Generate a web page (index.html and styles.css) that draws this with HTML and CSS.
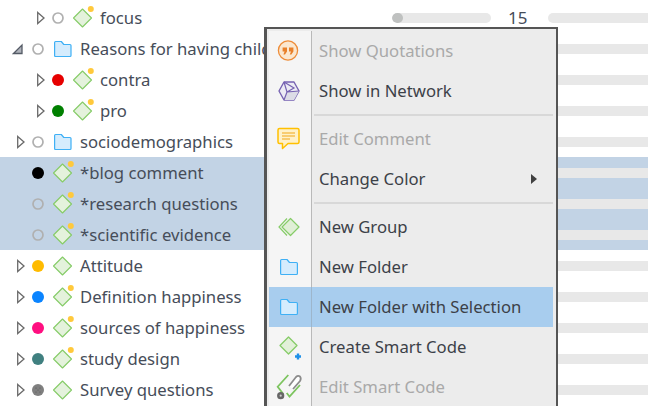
FILE: index.html
```html
<!DOCTYPE html>
<html lang="en">
<head>
<meta charset="utf-8">
<title>Code Manager</title>
<link rel="stylesheet" href="styles.css">
</head>
<body>
<svg class="defs" width="0" height="0" aria-hidden="true">
  <symbol id="closed" viewBox="0 0 19 14"><path d="M5.7 1.5 L12 7 L5.7 12.5 Z" fill="#fff" stroke="#6a6a6a" stroke-width="1.3"/></symbol>
  <symbol id="open" viewBox="0 0 19 14"><path d="M1.5 11.5 L10 3 V11.5 Z" fill="#aeb2ba" stroke="#555b66" stroke-width="1.3"/></symbol>
  <symbol id="ring" viewBox="0 0 14 14"><circle cx="7" cy="7" r="5" fill="none" stroke="#b0b0b0" stroke-width="1.7"/></symbol>
  <symbol id="disc" viewBox="0 0 14 14"><circle cx="7" cy="7" r="6" fill="currentColor"/></symbol>
  <symbol id="code" viewBox="0 0 22 24"><path d="M9.5 3 L18.5 12 L9.5 21 L0.5 12 Z" fill="#e4f2dc" stroke="#86cc68" stroke-width="1.1" stroke-linejoin="round"/></symbol>
  <symbol id="memo" viewBox="0 0 22 24"><path d="M9.5 3 L18.5 12 L9.5 21 L0.5 12 Z" fill="#e4f2dc" stroke="#86cc68" stroke-width="1.1" stroke-linejoin="round"/><circle cx="17.8" cy="3" r="3" fill="#ffc93c"/></symbol>
  <symbol id="folder" viewBox="0 0 22 24"><path d="M1.6 5.5 Q1.6 4.5 2.6 4.5 H8.3 L10.8 7.5 H17 Q18 7.5 18 8.5 V18.5 Q18 19.5 17 19.5 H2.6 Q1.6 19.5 1.6 18.5 Z" fill="#d5ecfd" stroke="#3fb0f5" stroke-width="1.2" stroke-linejoin="round"/></symbol>
</svg>

<main class="tree">
  <div class="row"><div class="cell l2"><svg class="twist"><use href="#closed"/></svg><svg class="bullet"><use href="#ring"/></svg><svg class="glyph"><use href="#memo"/></svg><span class="label">focus</span></div><div class="bar"><i class="fill"></i></div><div class="count">15</div><div class="bar wide"></div></div>
  <div class="row"><div class="cell l1"><svg class="twist"><use href="#open"/></svg><svg class="bullet"><use href="#ring"/></svg><svg class="glyph"><use href="#folder"/></svg><span class="label">Reasons for having children</span></div><div class="bar"></div><div class="count"></div><div class="bar wide"></div></div>
  <div class="row"><div class="cell l2"><svg class="twist"><use href="#closed"/></svg><svg class="bullet c-red"><use href="#disc"/></svg><svg class="glyph"><use href="#memo"/></svg><span class="label">contra</span></div><div class="bar"></div><div class="count"></div><div class="bar wide"></div></div>
  <div class="row"><div class="cell l2"><svg class="twist"><use href="#closed"/></svg><svg class="bullet c-green"><use href="#disc"/></svg><svg class="glyph"><use href="#memo"/></svg><span class="label">pro</span></div><div class="bar"></div><div class="count"></div><div class="bar wide"></div></div>
  <div class="row"><div class="cell l1"><svg class="twist"><use href="#closed"/></svg><svg class="bullet"><use href="#ring"/></svg><svg class="glyph"><use href="#folder"/></svg><span class="label">sociodemographics</span></div><div class="bar"></div><div class="count"></div><div class="bar wide"></div></div>
  <div class="row sel"><div class="cell l1"><span class="twist"></span><svg class="bullet c-black"><use href="#disc"/></svg><svg class="glyph"><use href="#memo"/></svg><span class="label">*blog comment</span></div><div class="bar"></div><div class="count"></div><div class="bar wide"></div></div>
  <div class="row sel"><div class="cell l1"><span class="twist"></span><svg class="bullet"><use href="#ring"/></svg><svg class="glyph"><use href="#memo"/></svg><span class="label">*research questions</span></div><div class="bar"></div><div class="count"></div><div class="bar wide"></div></div>
  <div class="row sel"><div class="cell l1"><span class="twist"></span><svg class="bullet"><use href="#ring"/></svg><svg class="glyph"><use href="#memo"/></svg><span class="label">*scientific evidence</span></div><div class="bar"></div><div class="count"></div><div class="bar wide"></div></div>
  <div class="row"><div class="cell l1"><svg class="twist"><use href="#closed"/></svg><svg class="bullet c-amber"><use href="#disc"/></svg><svg class="glyph"><use href="#code"/></svg><span class="label">Attitude</span></div><div class="bar"></div><div class="count"></div><div class="bar wide"></div></div>
  <div class="row"><div class="cell l1"><svg class="twist"><use href="#closed"/></svg><svg class="bullet c-blue"><use href="#disc"/></svg><svg class="glyph"><use href="#memo"/></svg><span class="label">Definition happiness</span></div><div class="bar"></div><div class="count"></div><div class="bar wide"></div></div>
  <div class="row"><div class="cell l1"><svg class="twist"><use href="#closed"/></svg><svg class="bullet c-pink"><use href="#disc"/></svg><svg class="glyph"><use href="#memo"/></svg><span class="label">sources of happiness</span></div><div class="bar"></div><div class="count"></div><div class="bar wide"></div></div>
  <div class="row"><div class="cell l1"><svg class="twist"><use href="#closed"/></svg><svg class="bullet c-teal"><use href="#disc"/></svg><svg class="glyph"><use href="#memo"/></svg><span class="label">study design</span></div><div class="bar"></div><div class="count"></div><div class="bar wide"></div></div>
  <div class="row"><div class="cell l1"><svg class="twist"><use href="#closed"/></svg><svg class="bullet c-grey" viewBox="0 0 14 14"><circle cx="7" cy="7" r="6" fill="#7f7f7f"/><circle cx="5" cy="5" r=".6" fill="#555"/><circle cx="9" cy="5" r=".6" fill="#555"/><circle cx="7" cy="7" r=".6" fill="#555"/><circle cx="5" cy="9" r=".6" fill="#555"/><circle cx="9" cy="9" r=".6" fill="#555"/></svg><svg class="glyph"><use href="#code"/></svg><span class="label">Survey questions</span></div><div class="bar"></div><div class="count"></div><div class="bar wide"></div></div>
</main>

<nav class="menu">
  <div class="item off"><div class="gutter"><svg class="micon" viewBox="0 0 24 24"><circle cx="12" cy="11.5" r="9.6" fill="#fbe7cf" stroke="#ee8c38" stroke-width="1.3"/><path d="M6.6 8.5 H11 V12.5 L9 15.5 H7.4 L8.6 12.5 H6.6 Z M13 8.5 H17.4 V12.5 L15.4 15.5 H13.8 L15 12.5 H13 Z" fill="#e8802a"/></svg></div><span class="text">Show Quotations</span></div>
  <div class="item"><div class="gutter"><svg class="micon" viewBox="0 0 24 24"><path d="M8 3 H18 L23 12 L18 21 H8 L3 12 Z" fill="#ecebf4" stroke="#7662b2" stroke-width="1.4" stroke-linejoin="round"/><path d="M11 13 L23 12 L18 21 H8 Z" fill="#dcdce6"/><path d="M8 3 L11 13 L8 21 M11 13 L23 12 M8 3 L18 9 L11 13" fill="none" stroke="#7662b2" stroke-width="1.2"/></svg></div><span class="text">Show in Network</span></div>
  <div class="sep"><div class="gutter"></div><div class="rule"></div></div>
  <div class="item off"><div class="gutter"><svg class="micon" viewBox="0 0 24 24"><path d="M3.5 1.5 H21.5 Q23 1.5 23 3 V15 Q23 16.5 21.5 16.5 H12 L6.5 21.5 V16.5 H3.5 Q2 16.5 2 15 V3 Q2 1.5 3.5 1.5 Z" fill="#fff1c9" stroke="#ffc000" stroke-width="1.5" stroke-linejoin="round"/><path d="M6 6 H19 M6 9 H19 M6 12 H14" stroke="#f2a71b" stroke-width="1.2"/></svg></div><span class="text">Edit Comment</span></div>
  <div class="item sub"><div class="gutter"></div><span class="text">Change Color</span><svg class="caret" viewBox="0 0 6 10"><path d="M0 0 L6 5 L0 10 Z" fill="#404040"/></svg></div>
  <div class="sep"><div class="gutter"></div><div class="rule"></div></div>
  <div class="item"><div class="gutter"><svg class="micon" viewBox="0 0 24 24"><path d="M11 3.5 L3 12 L11 20.5" fill="none" stroke="#86cc68" stroke-width="1.2"/><path d="M14.5 3.5 L23 12 L14.5 20.5 L6 12 Z" fill="#e0efd6" stroke="#86cc68" stroke-width="1.2" stroke-linejoin="round"/></svg></div><span class="text">New Group</span></div>
  <div class="item"><div class="gutter"><svg class="micon" viewBox="0 0 24 24"><path d="M4.6 5.5 Q4.6 4.5 5.6 4.5 H11 L13.5 7.5 H20.4 Q21.4 7.5 21.4 8.5 V18.5 Q21.4 19.5 20.4 19.5 H5.6 Q4.6 19.5 4.6 18.5 Z" fill="#d5ecfd" stroke="#3fb0f5" stroke-width="1.2" stroke-linejoin="round"/></svg></div><span class="text">New Folder</span></div>
  <div class="item hover"><div class="gutter"><svg class="micon" viewBox="0 0 24 24"><path d="M4.6 5.5 Q4.6 4.5 5.6 4.5 H11 L13.5 7.5 H20.4 Q21.4 7.5 21.4 8.5 V18.5 Q21.4 19.5 20.4 19.5 H5.6 Q4.6 19.5 4.6 18.5 Z" fill="#d5ecfd" stroke="#3fb0f5" stroke-width="1.2" stroke-linejoin="round"/></svg></div><span class="text">New Folder with Selection</span></div>
  <div class="item"><div class="gutter"><svg class="micon" viewBox="0 0 24 24"><path d="M12.5 2 L21 10.5 L12.5 19 L4 10.5 Z" fill="#e2f0d9" stroke="#86cc68" stroke-width="1.3" stroke-linejoin="round"/><path d="M22 18.5 V24.5 M19 21.5 H25" stroke="#1e90e8" stroke-width="2.4"/></svg></div><span class="text">Create Smart Code</span></div>
  <div class="item off"><div class="gutter"><svg class="micon" viewBox="0 0 24 24"><path d="M12.3 0 L1.7 11.7 L7.3 19" fill="none" stroke="#7cc45e" stroke-width="1.8"/><path d="M10.7 18 L13.5 21.5 L24 10" fill="none" stroke="#7cc45e" stroke-width="1.8"/><path d="M13 11 L20 2 Q22 0 24 1.5 Q25.5 3.5 24 6 L17 14" fill="#fff" stroke="#8c8c8c" stroke-width="1.8"/><circle cx="4.7" cy="20.7" r="3.6" fill="#666"/><circle cx="4.7" cy="20.7" r="1.1" fill="#ccc"/></svg></div><span class="text">Edit Smart Code</span></div>
</nav>
</body>
</html>
```
FILE: styles.css
```css
html, body {
  margin: 0;
  height: 406px;
  overflow: hidden;
  background: #fff;
}
body {
  position: relative;
  font-family: "Noto Sans", "Open Sans", sans-serif;
  font-size: 16.7px;
  color: #464d59;
}
.defs { display: block; height: 0; }

.tree { padding-top: 2px; }
.row {
  display: grid;
  grid-template-columns: 392px 99px 57px 1fr;
  align-items: center;
  height: 31px;
}
.row.sel { background: #c2d3e5; }
.cell {
  display: flex;
  align-items: center;
  height: 31px;
  overflow: hidden;
  white-space: nowrap;
}
.cell.l1 { padding-left: 12px; }
.cell.l2 { padding-left: 32px; }
.twist { display: block; flex: none; width: 19px; height: 14px; }
.bullet { display: block; flex: none; width: 14px; height: 14px; }
.glyph { display: block; flex: none; width: 22px; height: 24px; margin-left: 8px; }
.label { margin-left: 5px; line-height: 31px; }
.c-red { color: #e60000; }
.c-green { color: #008000; }
.c-black { color: #000; }
.c-amber { color: #ffbb00; }
.c-blue { color: #0a84ff; }
.c-pink { color: #ff0f80; }
.c-teal { color: #408080; }

.bar {
  height: 10px;
  border-radius: 5px;
  background: #e8e8e8;
  overflow: hidden;
}
.bar.wide { border-radius: 5px 0 0 5px; }
.fill {
  display: block;
  width: 11px;
  height: 10px;
  border-radius: 5px;
  background: #bfc1c0;
}
.count { padding-left: 17px; line-height: 31px; font-size: 17px; }

.menu {
  position: absolute;
  left: 264px;
  top: 27px;
  width: 284px;
  padding: 2px 3px 0 2px;
  border: solid #555;
  border-width: 2px 2px 0 3px;
  background: #ececec;
  color: #3c4148;
}
.item, .sep { display: flex; }
.item { align-items: center; height: 40px; }
.sep { height: 8px; }
.gutter {
  flex: none;
  display: flex;
  align-items: center;
  align-self: stretch;
  box-sizing: border-box;
  width: 43px;
  padding-left: 7px;
  background: #f5f5f5;
  border-right: 1px solid #b9b9b9;
}
.rule {
  flex: 1;
  height: 2px;
  margin: 3px 0 0 2px;
  background: #d8d8d8;
}
.text { margin-left: 7px; padding-bottom: 2px; white-space: nowrap; }
.off .text { color: #a9a9a9; }
.caret { display: block; width: 6px; height: 10px; margin-left: auto; margin-right: 16px; }
.hover { background: #a8cdee; }
.hover .gutter { background: transparent; border-right-color: #9db6cc; }
.micon { display: block; flex: none; width: 24px; height: 24px; overflow: visible; }
```
